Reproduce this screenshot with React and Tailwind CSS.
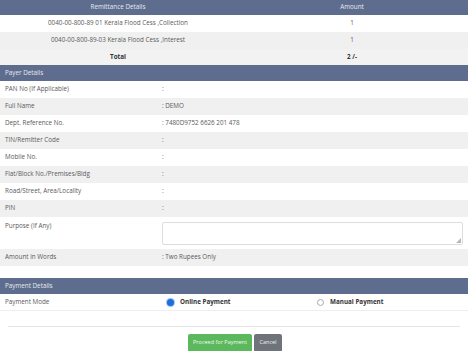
import React from 'react'

const payer = [
  ['PAN No (If Applicable)', ':'],
  ['Full Name', ': DEMO'],
  ['Dept. Reference No.', ': 7480D9752 6626 201 478'],
  ['TIN/Remitter Code', ':'],
  ['Mobile No.', ':'],
  ['Flat/Block No./Premises/Bldg', ':'],
  ['Road/Street, Area/Locality', ':'],
  ['PIN', ':'],
]

function Row({ label, value, gray }) {
  return (
    <div className={`flex h-[17px] items-center ${gray ? 'bg-[#f0f0f0]' : 'bg-white'}`}>
      <div className="w-[162px] pl-[5px]">{label}</div>
      <div>{value}</div>
    </div>
  )
}

export default function App() {
  return (
    <div className="w-[474px] h-[351px] overflow-hidden bg-white text-[6.3px] text-[#5a5a5a] leading-none"
         style={{ fontFamily: '"Open Sans", "Liberation Sans", sans-serif' }}>
      <div className="w-[468px]">
        {/* Remittance */}
        <div className="flex h-[15px] items-center bg-[#5e6d8d] text-[#e6e9f0]">
          <div className="w-[236px] text-center">Remittance Details</div>
          <div className="flex-1 text-center">Amount</div>
        </div>
        <div className="flex h-[17px] items-center bg-white">
          <div className="w-[236px] text-center">0040-00-800-89 01 Kerala Flood Cess ,Collection</div>
          <div className="flex-1 text-center">1</div>
        </div>
        <div className="flex h-[17px] items-center bg-[#f0f0f0]">
          <div className="w-[236px] text-center">0040-00-800-89-03 Kerala Flood Cess ,Interest</div>
          <div className="flex-1 text-center">1</div>
        </div>
        <div className="flex h-[16px] items-center bg-[#f2f2f2] font-bold text-[#333]">
          <div className="w-[236px] text-center">Total</div>
          <div className="flex-1 text-center">2 /-</div>
        </div>

        {/* Payer */}
        <div className="flex h-[16px] items-center bg-[#5e6d8d] pl-[5px] text-[#e6e9f0]">Payer Details</div>
        {payer.map(([l, v], i) => (
          <Row key={l} label={l} value={v} gray={i % 2 === 1} />
        ))}
        <div className="flex h-[32px] bg-white">
          <div className="w-[162px] pl-[5px] pt-[6px]">Purpose (If Any)</div>
          <div className="relative mt-[5px] h-[23px] w-[301px] rounded-[2px] border border-[#ddd] bg-white">
            <svg className="absolute bottom-[1px] right-[1px]" width="5" height="5" viewBox="0 0 5 5">
              <path d="M5 0 L5 5 L0 5 Z" fill="#b8b8b8" />
            </svg>
          </div>
        </div>
        <Row label="Amount in Words" value=": Two Rupees Only" gray />

        {/* Payment */}
        <div className="mt-[12px] flex h-[16px] items-center bg-[#5e6d8d] pl-[5px] text-[#e6e9f0]">Payment Details</div>
        <div className="flex h-[17px] items-center border-b border-[#eee] bg-white">
          <div className="w-[167px] pl-[5px]">Payment Mode</div>
          <div className="flex w-[150px] items-center gap-[6px] font-bold text-[#333]">
            <span className="h-[7px] w-[7px] rounded-full bg-[#1e6fd9] ring-1 ring-[#9ec2f0]" />
            Online Payment
          </div>
          <div className="flex items-center gap-[6px] font-bold text-[#333]">
            <span className="h-[7px] w-[7px] rounded-full border border-[#aaa] bg-white" />
            Manual Payment
          </div>
        </div>
        <div className="mx-[8px] mt-[15px] border-t border-[#e5e5e5]" />
        <div className="mt-[7px] flex justify-center gap-[2px] pl-[2px]">
          <button className="h-[18px] w-[64px] rounded-[2px] bg-[#5cb85c] text-[5.5px] text-[#eef8ee]">Proceed for Payment</button>
          <button className="h-[18px] w-[28px] rounded-[2px] bg-[#6f747c] text-[5.5px] text-[#eee]">Cancel</button>
        </div>
      </div>
    </div>
  )
}
